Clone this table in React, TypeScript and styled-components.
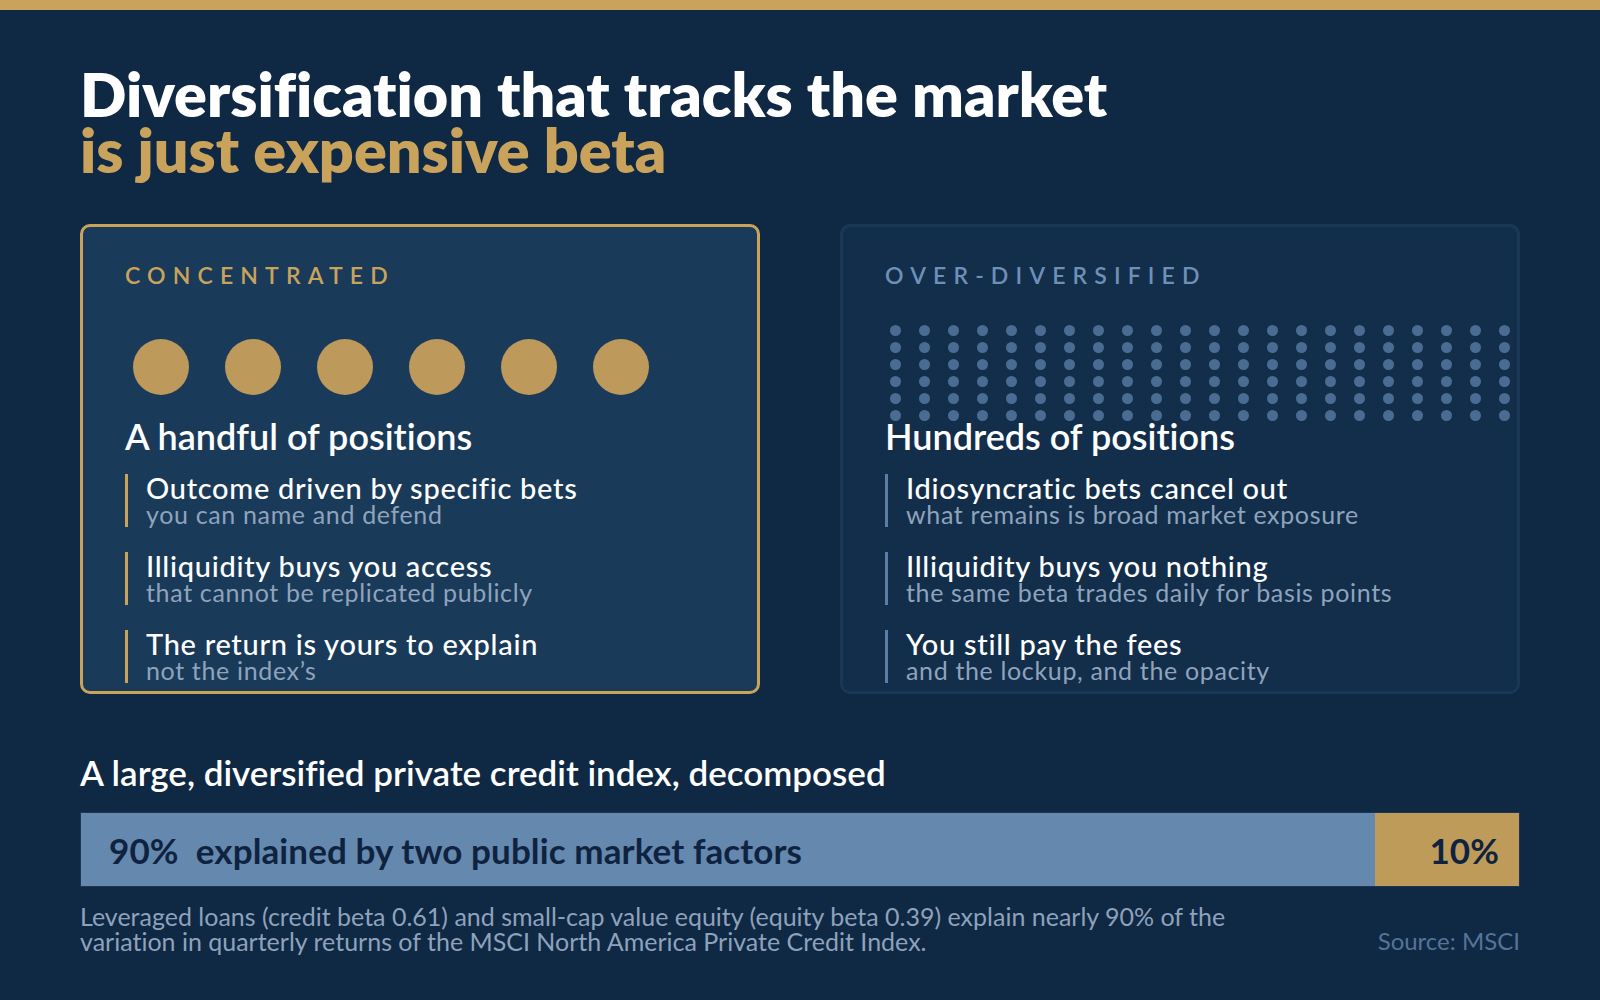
import styled, { createGlobalStyle } from "styled-components";

const GlobalStyle = createGlobalStyle`
	html, body {
		margin: 0;
		padding: 0;
		background: #0f2844;
	}
	body {
		font-family: Lato, "Open Sans", "Liberation Sans", sans-serif;
		font-variant-ligatures: none;
		-webkit-font-smoothing: antialiased;
	}
`;

const GOLD = "#c9a35c";

const Page = styled.div`
	box-sizing: border-box;
	width: 1600px;
	height: 1000px;
	background: #0f2844;
	border-top: 10px solid ${GOLD};
	padding: 56px 80px 0;
	overflow: hidden;
`;

const Title = styled.h1`
	margin: 0;
	font-size: 61px;
	line-height: 56px;
	font-weight: 800;
	color: #ffffff;

	span {
		display: block;
		color: ${GOLD};
	}
`;

const Cards = styled.div`
	display: grid;
	grid-template-columns: repeat(2, minmax(0, 1fr));
	gap: 80px;
	margin-top: 46px;
`;

const Card = styled.section<{ $accent: boolean }>`
	box-sizing: border-box;
	height: 470px;
	padding: 35px 42px 0;
	border-radius: 10px;
	border: 3px solid ${p => (p.$accent ? GOLD : "#1a3856")};
	background: ${p => (p.$accent ? "#1a3a5a" : "#122e4b")};
`;

const Label = styled.div<{ $accent: boolean }>`
	font-size: 23px;
	line-height: 26px;
	font-weight: 600;
	letter-spacing: 0.31em;
	color: ${p => (p.$accent ? GOLD : "#6e90b8")};
`;

const Visual = styled.div`
	height: 96px;
	margin-top: 37px;
`;

const CircleRow = styled.div`
	display: flex;
	gap: 36px;
	padding: 14px 0 0 8px;
`;

const Circle = styled.div`
	width: 56px;
	height: 56px;
	border-radius: 50%;
	background: #bd9a5c;
`;

const DotGrid = styled.div`
	display: grid;
	grid-template-columns: repeat(22, 11px);
	grid-auto-rows: 11px;
	column-gap: 18px;
	row-gap: 6px;
	padding-left: 5px;
`;

const Dot = styled.div`
	width: 11px;
	height: 11px;
	border-radius: 50%;
	background: #4b6c92;
`;

const Heading = styled.h2`
	margin: 0;
	font-size: 36px;
	line-height: 31px;
	font-weight: 600;
	color: #ffffff;
`;

const Points = styled.ul`
	list-style: none;
	margin: 22px 0 0;
	padding: 0;
	display: flex;
	flex-direction: column;
	gap: 25px;
`;

const Point = styled.li<{ $accent: boolean }>`
	border-left: 3px solid ${p => (p.$accent ? GOLD : "#5b7ea6")};
	padding-left: 18px;

	strong {
		display: block;
		font-size: 29px;
		line-height: 28px;
		font-weight: 500;
		letter-spacing: 0.7px;
		color: #ffffff;
	}

	small {
		display: block;
		font-size: 25px;
		line-height: 25px;
		font-weight: 400;
		letter-spacing: 0.65px;
		color: #8fa3bc;
	}
`;

const SectionTitle = styled.h3`
	margin: 59px 0 0;
	font-size: 35px;
	line-height: 38px;
	font-weight: 600;
	color: #ffffff;
`;

const Bar = styled.div`
	display: flex;
	height: 75px;
	margin-top: 21px;
	border: 1px solid #1d3552;
	box-sizing: border-box;
`;

const Segment = styled.div<{ $tone: "blue" | "gold" }>`
	display: flex;
	align-items: center;
	justify-content: ${p => (p.$tone === "gold" ? "flex-end" : "flex-start")};
	box-sizing: border-box;
	padding: 1px ${p => (p.$tone === "gold" ? "20px" : "0")} 0 ${p => (p.$tone === "gold" ? "0" : "28px")};
	background: ${p => (p.$tone === "gold" ? "#bf9b59" : "#6488ae")};
	font-size: 35px;
	font-weight: 700;
	letter-spacing: 0.1px;
	color: #0f2340;
	white-space: pre;
`;

const Footer = styled.div`
	display: flex;
	justify-content: space-between;
	align-items: flex-end;
	margin-top: 17px;
`;

const Caption = styled.p`
	margin: 0;
	max-width: 1180px;
	font-size: 25px;
	line-height: 24.5px;
	color: #8ea2bb;
`;

const Source = styled.div`
	font-size: 24px;
	line-height: 24.5px;
	color: #56739a;
`;

interface PointData {
	title: string;
	sub: string;
}

const concentrated: PointData[] = [
	{ title: "Outcome driven by specific bets", sub: "you can name and defend" },
	{ title: "Illiquidity buys you access", sub: "that cannot be replicated publicly" },
	{ title: "The return is yours to explain", sub: "not the index\u2019s" },
];

const diversified: PointData[] = [
	{ title: "Idiosyncratic bets cancel out", sub: "what remains is broad market exposure" },
	{ title: "Illiquidity buys you nothing", sub: "the same beta trades daily for basis points" },
	{ title: "You still pay the fees", sub: "and the lockup, and the opacity" },
];

function PointList({ items, accent }: { items: PointData[]; accent: boolean }) {
	return (
		<Points>
			{items.map(item => (
				<Point key={item.title} $accent={accent}>
					<strong>{item.title}</strong>
					<small>{item.sub}</small>
				</Point>
			))}
		</Points>
	);
}

export default function App() {
	const explained = 90;

	return (
		<>
			<GlobalStyle />
			<Page>
				<Title>
					Diversification that tracks the market
					<span>is just expensive beta</span>
				</Title>

				<Cards>
					<Card $accent>
						<Label $accent>CONCENTRATED</Label>
						<Visual>
							<CircleRow>
								{Array.from({ length: 6 }, (_, i) => (
									<Circle key={i} />
								))}
							</CircleRow>
						</Visual>
						<Heading>A handful of positions</Heading>
						<PointList items={concentrated} accent />
					</Card>

					<Card $accent={false}>
						<Label $accent={false}>OVER-DIVERSIFIED</Label>
						<Visual>
							<DotGrid>
								{Array.from({ length: 22 * 6 }, (_, i) => (
									<Dot key={i} />
								))}
							</DotGrid>
						</Visual>
						<Heading>Hundreds of positions</Heading>
						<PointList items={diversified} accent={false} />
					</Card>
				</Cards>

				<SectionTitle>A large, diversified private credit index, decomposed</SectionTitle>
				<Bar>
					<Segment $tone="blue" style={{ width: `${explained}%` }}>
						{`${explained}%  explained by two public market factors`}
					</Segment>
					<Segment $tone="gold" style={{ width: `${100 - explained}%` }}>
						{`${100 - explained}%`}
					</Segment>
				</Bar>

				<Footer>
					<Caption>
						Leveraged loans (credit beta 0.61) and small-cap value equity (equity beta 0.39) explain nearly 90% of the
						variation in quarterly returns of the MSCI North America Private Credit Index.
					</Caption>
					<Source>Source: MSCI</Source>
				</Footer>
			</Page>
		</>
	);
}
